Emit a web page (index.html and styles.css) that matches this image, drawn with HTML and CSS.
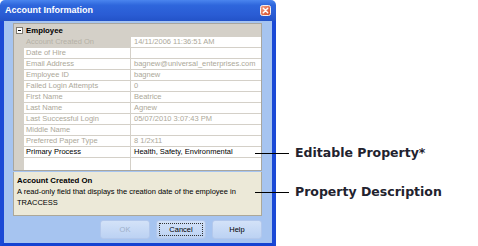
FILE: index.html
```html
<!DOCTYPE html>
<html>
<head>
  <meta charset="utf-8">
  <title>Account Information</title>
  <link rel="stylesheet" href="styles.css">
</head>
<body>
  <div class="stage">
    <div class="window">
      <!-- Title bar -->
      <div class="titlebar">
        <span class="title">Account Information</span>
        <span class="close">
          <svg width="11" height="11" viewBox="0 0 11 11">
            <defs>
              <linearGradient id="closeFill" x1="0" y1="0" x2="1" y2="1">
                <stop offset="0" stop-color="#f4a48a"/>
                <stop offset="1" stop-color="#d2441f"/>
              </linearGradient>
            </defs>
            <rect x="0.5" y="0.5" width="10" height="10" rx="2" fill="url(#closeFill)" stroke="#f6f0ee"/>
            <path d="M3.3 3.3 L7.7 7.7 M7.7 3.3 L3.3 7.7" stroke="#fff" stroke-width="1.5" stroke-linecap="round"/>
          </svg>
        </span>
      </div>

      <div class="dialog-body">
        <!-- Property grid -->
        <div class="grid">
          <div class="row header">
            <span class="gutter"><span class="toggle"></span></span>
            <span class="category">Employee</span>
          </div>
          <div class="row readonly selected">
            <span class="gutter"></span><span class="name">Account Created On</span><span class="value">14/11/2006 11:36:51 AM</span>
          </div>
          <div class="row readonly">
            <span class="gutter"></span><span class="name">Date of Hire</span><span class="value"></span>
          </div>
          <div class="row readonly">
            <span class="gutter"></span><span class="name">Email Address</span><span class="value">bagnew@universal_enterprises.com</span>
          </div>
          <div class="row readonly">
            <span class="gutter"></span><span class="name">Employee ID</span><span class="value">bagnew</span>
          </div>
          <div class="row readonly">
            <span class="gutter"></span><span class="name">Failed Login Attempts</span><span class="value">0</span>
          </div>
          <div class="row readonly">
            <span class="gutter"></span><span class="name">First Name</span><span class="value">Beatrice</span>
          </div>
          <div class="row readonly">
            <span class="gutter"></span><span class="name">Last Name</span><span class="value">Agnew</span>
          </div>
          <div class="row readonly">
            <span class="gutter"></span><span class="name">Last Successful Login</span><span class="value">05/07/2010 3:07:43 PM</span>
          </div>
          <div class="row readonly">
            <span class="gutter"></span><span class="name">Middle Name</span><span class="value"></span>
          </div>
          <div class="row readonly">
            <span class="gutter"></span><span class="name">Preferred Paper Type</span><span class="value">8 1/2x11</span>
          </div>
          <div class="row">
            <span class="gutter"></span><span class="name">Primary Process</span><span class="value">Health, Safety, Environmental</span>
          </div>
          <div class="row empty">
            <span class="gutter"></span><span class="name"></span><span class="value"></span>
          </div>
        </div>

        <!-- Description pane -->
        <div class="desc">
          <div class="desc-title">Account Created On</div>
          <div class="desc-text">A read-only field that displays the creation date of the employee in TRACCESS</div>
        </div>

        <!-- Buttons -->
        <div class="buttons">
          <button class="btn" disabled>OK</button>
          <button class="btn focused"><span class="btn-label">Cancel</span></button>
          <button class="btn">Help</button>
        </div>
      </div>
    </div>

    <!-- Callouts -->
    <div class="callout editable">
      <span class="callout-line"></span>
      <span class="callout-label">Editable Property*</span>
    </div>
    <div class="callout description">
      <span class="callout-line"></span>
      <span class="callout-label">Property Description</span>
    </div>
  </div>
</body>
</html>
```

FILE: styles.css
```css
body {
  margin: 0;
  padding: 0;
  background: #fff;
  font-family: 'Liberation Sans', Arial, sans-serif;
  font-size: 7.5px;
  color: #000;
}

.stage {
  position: relative;
  width: 478px;
  height: 246px;
  overflow: hidden;
}

.window {
  width: 276px;
  height: 246px;
  display: flex;
  flex-direction: column;
}

/* Title bar */
.titlebar {
  height: 21px;
  flex: none;
  display: flex;
  align-items: center;
  justify-content: space-between;
  padding: 0 5px 0 5px;
  background: linear-gradient(#4a85ee 0%, #2e66dc 25%, #2a5cd4 70%, #2353c8 100%);
  border-radius: 5px 5px 0 0;
}

.title {
  color: #fff;
  font-weight: bold;
  font-size: 9px;
  padding-bottom: 1px;
}

.close {
  display: flex;
  width: 11px;
  height: 11px;
}

/* Dialog body */
.dialog-body {
  flex: 1;
  display: flex;
  flex-direction: column;
  background: #a6c4f0;
  border-left: 4px solid #1a49d6;
  border-right: 4px solid #1a49d6;
  border-bottom: 4px solid #1443d2;
  padding: 2px 10px 4px 9px;
}

/* Property grid */
.grid {
  height: 148px;
  box-sizing: border-box;
  border: 1px solid #a8a69f;
  background: #fff;
  display: flex;
  flex-direction: column;
}

.row {
  display: flex;
  height: 11px;
  flex: none;
  line-height: 10px;
  white-space: nowrap;
}

.gutter {
  width: 10px;
  flex: none;
  background: #d4d0c8;
  display: flex;
  align-items: center;
}

.name {
  width: 107px;
  flex: none;
  box-sizing: border-box;
  padding-left: 2px;
  border-right: 1px solid #d4d0c8;
  border-bottom: 1px solid #d4d0c8;
  overflow: hidden;
}

.value {
  flex: 1;
  padding-left: 3px;
  border-bottom: 1px solid #d4d0c8;
  overflow: hidden;
}

.row.readonly {
  color: #aca899;
}

.row.selected .name {
  background: #d4d0c8;
  color: #b4b0a6;
}

.row.header {
  height: 13px;
  line-height: 13px;
  background: #d4d0c8;
}

.toggle {
  position: relative;
  width: 7px;
  height: 7px;
  margin-left: 2px;
  box-sizing: border-box;
  border: 1px solid #7f7b72;
  background: #fff;
}

.toggle::after {
  content: "";
  position: absolute;
  left: 1px;
  top: 2px;
  width: 3px;
  height: 1px;
  background: #000;
}

.category {
  font-weight: bold;
  padding-left: 2px;
  font-size: 7.8px;
}

.row.empty {
  flex: 1;
}

.row.empty .name,
.row.empty .value {
  border-bottom: none;
}

/* Description pane */
.desc {
  height: 44px;
  box-sizing: border-box;
  margin-top: 1px;
  padding: 3px 3px 0 3px;
  background: #ece9d8;
  border: 1px solid #aca899;
  border-top: none;
  line-height: 11px;
}

.desc-title {
  font-weight: bold;
  font-size: 7.8px;
}

/* Buttons */
.buttons {
  display: flex;
  justify-content: flex-end;
  gap: 6px;
  margin-top: 4px;
}

.btn {
  width: 50px;
  height: 19px;
  padding: 0;
  font-family: 'Liberation Sans', Arial, sans-serif;
  font-size: 7.5px;
  color: #000;
  background: linear-gradient(#d3e2f8, #bcd2f3);
  border: 1px solid #b3c8ec;
  border-radius: 3px;
  display: flex;
  align-items: center;
  justify-content: center;
}

.btn:disabled {
  color: #9eb0c9;
}

.btn.focused {
  padding: 2px;
}

.btn-label {
  flex: 1;
  align-self: stretch;
  display: flex;
  align-items: center;
  justify-content: center;
  border: 1px dotted #333;
}

/* Callouts pointing into the dialog */
.callout {
  position: absolute;
  left: 255px;
  height: 15px;
  display: flex;
  align-items: center;
}

.callout.editable {
  top: 146px;
}

.callout.description {
  top: 185px;
}

.callout-line {
  width: 34px;
  height: 1px;
  background: #000;
}

.callout-label {
  margin-left: 6px;
  margin-top: -2px;
  font-family: 'DejaVu Sans', Verdana, sans-serif;
  font-weight: bold;
  font-size: 12.5px;
  line-height: 15px;
  color: #22222e;
}
```
